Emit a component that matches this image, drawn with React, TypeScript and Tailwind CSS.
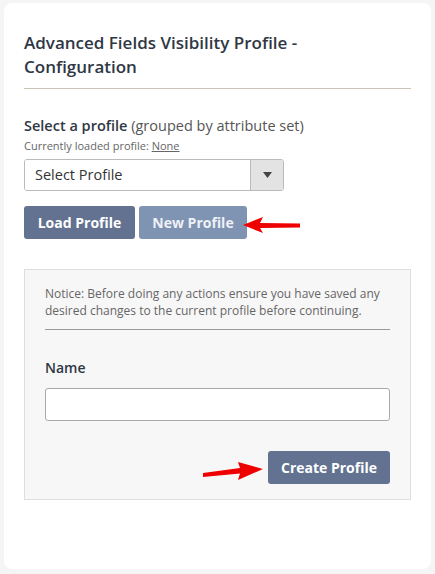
import React from 'react';

const RedArrowLeft: React.FC = () => (
  <svg width="60" height="20" viewBox="0 0 60 20" className="absolute left-[243px] top-[215px]">
    <path d="M0 10 L20 2 L17 8 L57 8.5 L57 12.5 L17 13 L20 18 Z" fill="#ee0000" />
  </svg>
);

const RedArrowRight: React.FC = () => (
  <svg width="62" height="22" viewBox="0 0 62 22" className="absolute left-[202px] top-[460px]">
    <path d="M61 9 L36 2 L38 8 L1 13 L1 17 L38 13.5 L36 20 Z" fill="#ee0000" />
  </svg>
);

const App: React.FC = () => {
  return (
    <div className="w-[435px] h-[574px] bg-[#f5f5f5] pt-[3px] pl-[4px] font-['Open_Sans',sans-serif] relative">
      <div className="w-[427px] h-[566px] bg-white rounded-lg pt-[28px] px-[20px]">
        <h1 className="text-[17px] leading-[24px] text-[#2f3744] font-semibold">
          Advanced Fields Visibility Profile -<br />Configuration
        </h1>
        <div className="mt-[9px] border-t border-[#cbc4b6] w-[387px]" />

        <div className="mt-[27px] text-[14.5px] leading-[20px] text-[#2f3744]">
          <span className="font-semibold">Select a profile</span>{' '}
          <span className="text-[#555]">(grouped by attribute set)</span>
        </div>
        <div className="mt-[2px] text-[11px] leading-[16px] text-[#666]">
          Currently loaded profile: <span className="underline">None</span>
        </div>

        <div className="mt-[5px] w-[260px] h-[32px] flex border border-[#bbb] rounded-[3px] overflow-hidden">
          <div className="flex-1 flex items-center pl-[10px] text-[14.5px] text-[#333] bg-white">
            Select Profile
          </div>
          <div className="w-[33px] flex items-center justify-center bg-[#e3e3e3] border-l border-[#bbb]">
            <svg width="9" height="6" viewBox="0 0 9 6">
              <path d="M0 0 L9 0 L4.5 6 Z" fill="#444" />
            </svg>
          </div>
        </div>

        <div className="mt-[15px] flex gap-[4px]">
          <button className="h-[33px] w-[111px] rounded-[3px] bg-[#627290] text-white text-[14px] font-bold">
            Load Profile
          </button>
          <button className="h-[33px] w-[108px] rounded-[3px] bg-[#7f93b3] text-[#eef1f6] text-[14px] font-bold">
            New Profile
          </button>
        </div>

        <div className="mt-[30px] w-[387px] h-[231px] bg-[#f7f7f7] border border-[#dedede] px-[20px] pt-[15px]">
          <p className="text-[12px] leading-[17px] text-[#666]">
            Notice: Before doing any actions ensure you have saved any desired changes to the current profile before continuing.
          </p>
          <div className="mt-[10px] border-t border-[#999]" />
          <div className="mt-[28px] text-[14px] leading-[20px] font-semibold text-[#2f3744]">Name</div>
          <div className="mt-[10px] h-[33px] bg-white border border-[#aaa] rounded-[3px]" />
          <div className="mt-[30px] flex justify-end">
            <button className="h-[33px] w-[122px] rounded-[3px] bg-[#627290] text-white text-[14px] font-bold">
              Create Profile
            </button>
          </div>
        </div>
      </div>
      <RedArrowLeft />
      <RedArrowRight />
    </div>
  );
};

export default App;
